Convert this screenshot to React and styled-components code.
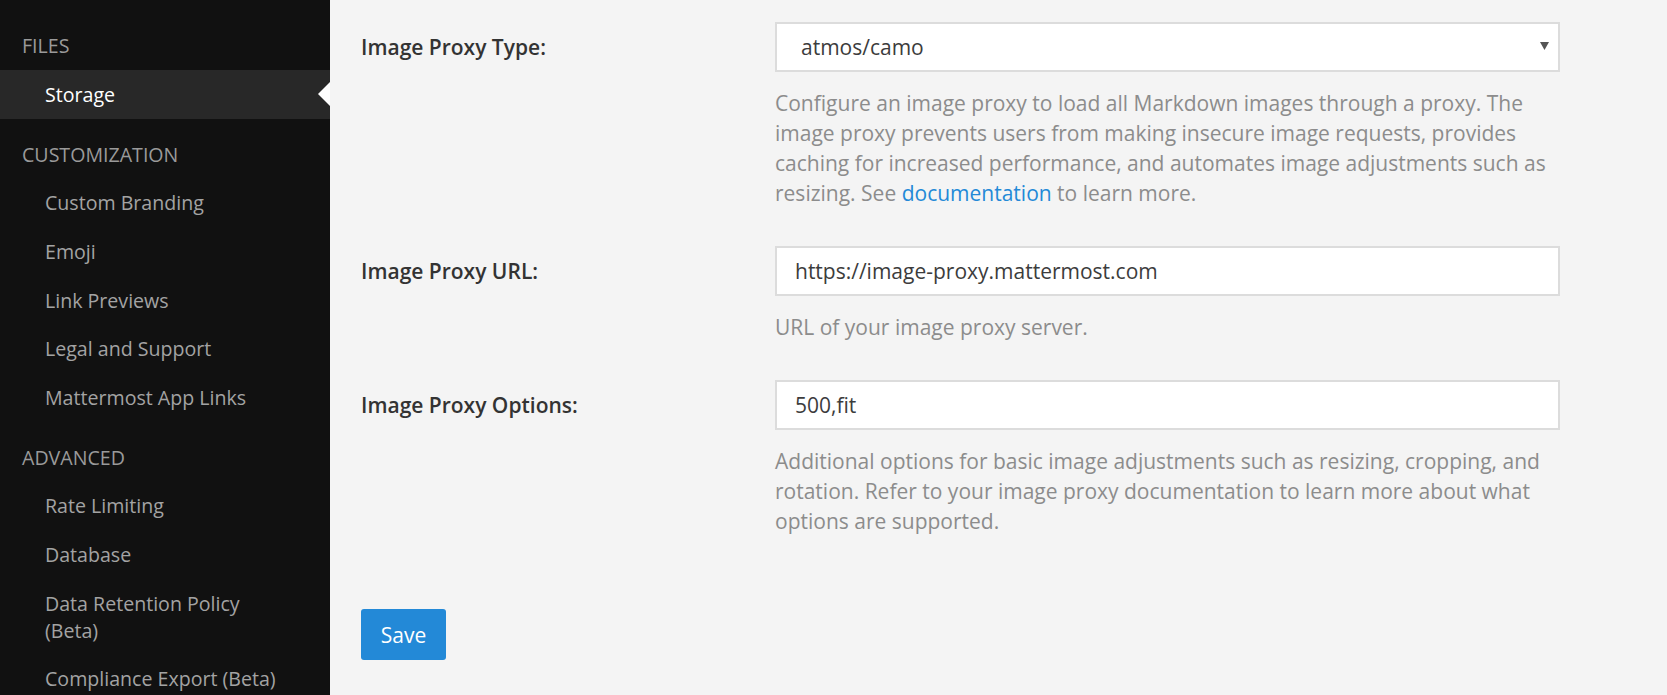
import React from "react";
import styled, { createGlobalStyle } from "styled-components";

const Global = createGlobalStyle`
  html, body { margin: 0; padding: 0; height: 100%; }
  body {
    font-family: "Open Sans", "Noto Sans", sans-serif;
    background: #f4f4f4;
    overflow: hidden;
  }
  * { box-sizing: border-box; }
`;

const Layout = styled.div`
  display: flex;
  height: 695px;
  width: 1667px;
`;

const Sidebar = styled.nav`
  width: 330px;
  flex: 0 0 330px;
  background: #111111;
  padding-top: 22px;
  overflow: hidden;
`;

const Section = styled.div`
  display: flex;
  flex-direction: column;
  & + & { margin-top: 12px; }
`;

const SectionHeader = styled.div`
  height: 48px;
  line-height: 48px;
  padding-left: 22px;
  font-size: 19.6px;
  color: #9a9a9a;
  text-transform: uppercase;
`;

const NavItem = styled.div`
  position: relative;
  padding: 10.8px 20px 10.8px 45px;
  line-height: 27px;
  font-size: 19.6px;
  color: ${(p) => (p.$active ? "#ffffff" : "#a3a3a3")};
  background: ${(p) => (p.$active ? "#282828" : "transparent")};
  ${(p) =>
    p.$active &&
    `
    &::after {
      content: "";
      position: absolute;
      right: 0;
      top: 50%;
      margin-top: -12px;
      border-style: solid;
      border-width: 12px 12px 12px 0;
      border-color: transparent #ffffff transparent transparent;
    }
  `}
`;

const Main = styled.main`
  flex: 1;
  padding: 22px 0 0 31px;
  background: #f4f4f4;
`;

const FormRow = styled.div`
  display: grid;
  grid-template-columns: 414px 785px;
  align-items: start;
  margin-bottom: 38px;
`;

const Label = styled.label`
  font-size: 21px;
  font-weight: 600;
  color: #333333;
  line-height: 50px;
`;

const Field = styled.div`
  display: flex;
  flex-direction: column;
`;

const TextInput = styled.input`
  height: 50px;
  width: 100%;
  border: 2px solid #dcdcdc;
  background: #ffffff;
  padding: 0 18px;
  font-family: inherit;
  font-size: 21px;
  color: #3c3c3c;
  outline: none;
`;

const SelectBox = styled.div`
  position: relative;
  height: 50px;
  border: 2px solid #dcdcdc;
  background: #ffffff;
  display: flex;
  align-items: center;
  padding: 0 40px 0 24px;
  font-size: 21px;
  color: #3c3c3c;
`;

const Caret = styled.svg`
  position: absolute;
  right: 9px;
  top: 18px;
`;

const Help = styled.div`
  margin-top: 16px;
  font-size: 21px;
  line-height: 30px;
  color: #8c8c8c;
`;

const Link = styled.a`
  color: #2389d7;
  text-decoration: none;
`;

const SaveButton = styled.button`
  margin-top: 35px;
  width: 85px;
  height: 51px;
  background: #2389d7;
  color: #ffffff;
  border: none;
  border-radius: 3px;
  font-family: inherit;
  font-size: 21px;
  padding: 0;
  cursor: pointer;
`;

const nav = [
  { title: "Files", items: ["Storage"] },
  {
    title: "Customization",
    items: [
      "Custom Branding",
      "Emoji",
      "Link Previews",
      "Legal and Support",
      "Mattermost App Links",
    ],
  },
  {
    title: "Advanced",
    items: [
      "Rate Limiting",
      "Database",
      "Data Retention Policy (Beta)",
      "Compliance Export (Beta)",
    ],
  },
];

export default function App() {
  return (
    <>
      <Global />
      <Layout>
        <Sidebar>
          {nav.map((s) => (
            <Section key={s.title}>
              <SectionHeader>{s.title}</SectionHeader>
              {s.items.map((it) => (
                <NavItem key={it} $active={it === "Storage"}>
                  {it === "Data Retention Policy (Beta)" ? (
                    <>
                      Data Retention Policy
                      <br />
                      (Beta)
                    </>
                  ) : (
                    it
                  )}
                </NavItem>
              ))}
            </Section>
          ))}
        </Sidebar>
        <Main>
          <FormRow>
            <Label>Image Proxy Type:</Label>
            <Field>
              <SelectBox>
                atmos/camo
                <Caret width="9" height="8" viewBox="0 0 9 8">
                  <path d="M0 0 H9 L4.5 8 Z" fill="#555555" />
                </Caret>
              </SelectBox>
              <Help>
                Configure an image proxy to load all Markdown images through a
                proxy. The image proxy prevents users from making insecure image
                requests, provides caching for increased performance, and
                automates image adjustments such as resizing. See{" "}
                <Link href="#">documentation</Link> to learn more.
              </Help>
            </Field>
          </FormRow>
          <FormRow>
            <Label>Image Proxy URL:</Label>
            <Field>
              <TextInput readOnly value="https://image-proxy.mattermost.com" />
              <Help>URL of your image proxy server.</Help>
            </Field>
          </FormRow>
          <FormRow>
            <Label>Image Proxy Options:</Label>
            <Field>
              <TextInput readOnly value="500,fit" />
              <Help>
                Additional options for basic image adjustments such as resizing,
                cropping, and rotation. Refer to your image proxy documentation
                to learn more about what options are supported.
              </Help>
            </Field>
          </FormRow>
          <SaveButton>Save</SaveButton>
        </Main>
      </Layout>
    </>
  );
}
